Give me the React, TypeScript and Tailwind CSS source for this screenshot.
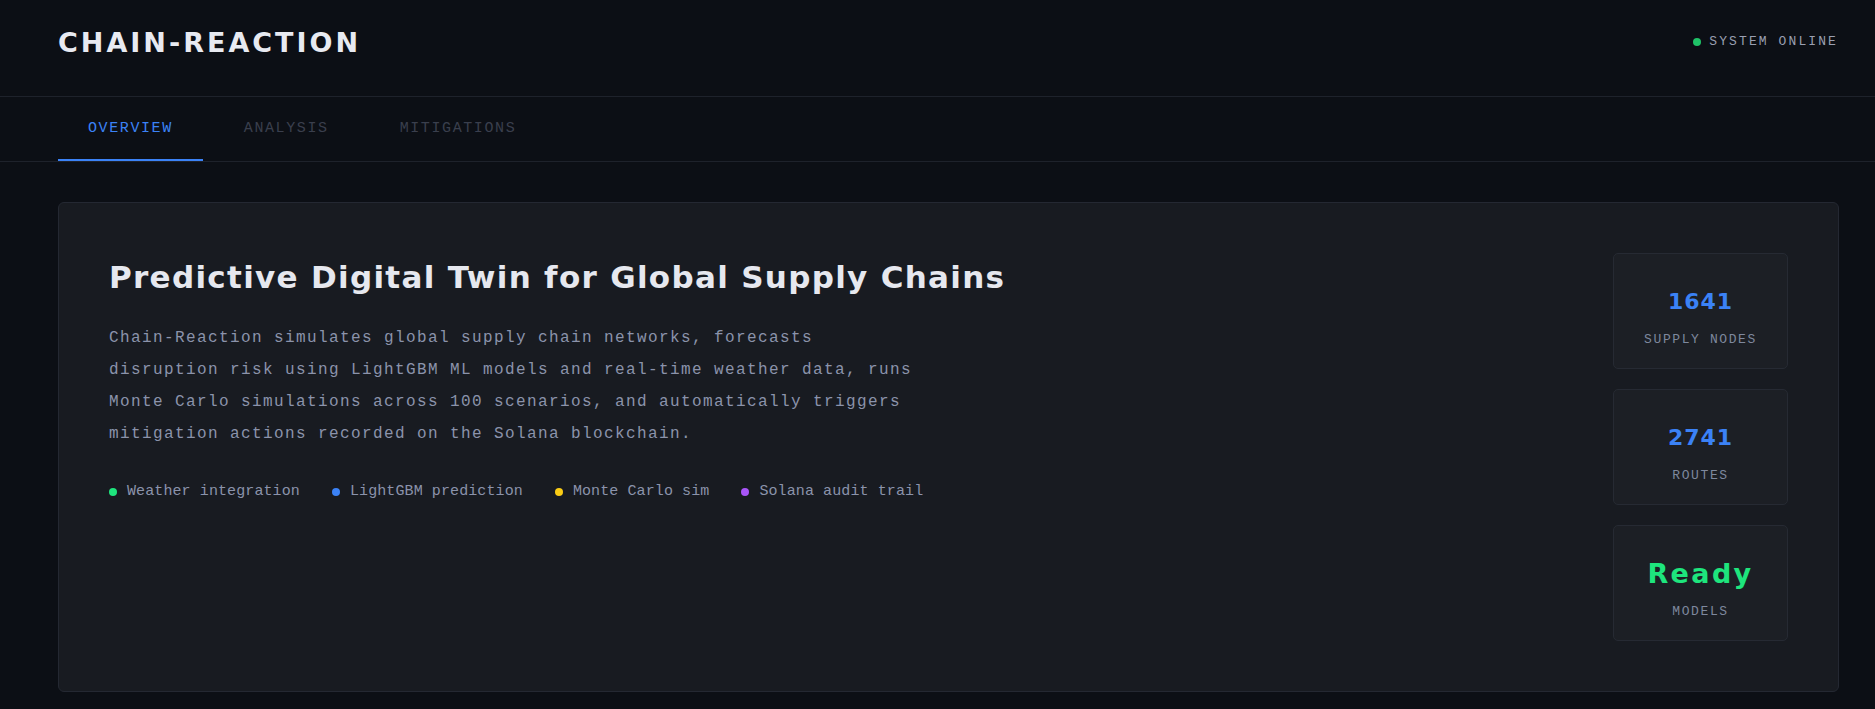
import React from 'react';

const tabs = ['OVERVIEW', 'ANALYSIS', 'MITIGATIONS'];

const features = [
  { label: 'Weather integration', dot: 'bg-[#1ee57d]' },
  { label: 'LightGBM prediction', dot: 'bg-[#3b82f6]' },
  { label: 'Monte Carlo sim', dot: 'bg-[#facc15]' },
  { label: 'Solana audit trail', dot: 'bg-[#a855f7]' },
];

const stats = [
  { value: '1641', label: 'SUPPLY NODES', color: 'text-[#3b82f6] text-[22px] tracking-[1px]' },
  { value: '2741', label: 'ROUTES', color: 'text-[#3b82f6] text-[22px] tracking-[1px]' },
  { value: 'Ready', label: 'MODELS', color: 'text-[#1ee57d] text-[27px] tracking-[2.4px]' },
];

const App: React.FC = () => {
  return (
    <div className="min-h-[709px] bg-[#0c0f15] text-[#e6e8ef] font-['Liberation_Mono',monospace]">
      {/* Top bar */}
      <header className="h-[97px] pl-[58px] pr-[37px] pb-3 flex items-center justify-between border-b border-[#1e222b]">
        <h1 className="font-['DejaVu_Sans',sans-serif] font-bold text-[27px] tracking-[3px] text-[#e8eaf1] leading-none">
          CHAIN-REACTION
        </h1>
        <div className="flex items-center gap-2">
          <span className="w-2 h-2 rounded-full bg-[#1fc267]" />
          <span className="text-[13px] tracking-[2.1px] text-[#9a9fb1]">SYSTEM ONLINE</span>
        </div>
      </header>

      {/* Tabs */}
      <nav className="h-[65px] pl-[58px] flex items-stretch gap-[11px] border-b border-[#1e222b]">
        {tabs.map((t, i) => (
          <button
            key={t}
            className={
              i === 0
                ? 'px-[30px] pt-[2px] text-[15px] tracking-[1.6px] text-[#3b82f6] border-b-2 border-[#3b82f6]'
                : 'px-[30px] pt-[2px] text-[15px] tracking-[1.6px] text-[#3a3f4d] border-b-2 border-transparent'
            }
          >
            {t}
          </button>
        ))}
      </nav>

      {/* Overview card */}
      <main className="pl-[58px] pr-[36px] pt-10 pb-[15px]">
        <section className="rounded-md border border-[#242832] bg-[#181b21] p-[50px] flex justify-between">
          <div>
            <h2 className="font-['DejaVu_Sans',sans-serif] font-bold text-[31px] leading-[40px] tracking-[1.3px] text-[#e6e8ef] mt-[4px]">
              Predictive Digital Twin for Global Supply Chains
            </h2>
            <p className="mt-[25px] max-w-[808px] text-[16px] leading-8 tracking-[1.4px] text-[#8b93ab]">
              Chain-Reaction simulates global supply chain networks, forecasts disruption risk using LightGBM ML models and real-time weather data, runs Monte Carlo simulations across 100 scenarios, and automatically triggers mitigation actions recorded on the Solana blockchain.
            </p>
            <div className="mt-[31px] flex items-center gap-8">
              {features.map((f) => (
                <div key={f.label} className="flex items-center gap-[10px]">
                  <span className={`w-2 h-2 rounded-full ${f.dot}`} />
                  <span className="text-[15px] tracking-[0.1px] text-[#8b93ab]">{f.label}</span>
                </div>
              ))}
            </div>
          </div>

          <div className="w-[175px] flex flex-col gap-5">
            {stats.map((s) => (
              <div
                key={s.label}
                className="h-[116px] pt-4 rounded-[5px] border border-[#262a33] bg-[#1c1f25] flex flex-col items-center justify-center"
              >
                <div className={`font-['DejaVu_Sans',sans-serif] font-bold leading-[28px] ${s.color}`}>
                  {s.value}
                </div>
                <div className="mt-[14px] text-[13px] tracking-[1.6px] text-[#7e889e]">{s.label}</div>
              </div>
            ))}
          </div>
        </section>
      </main>
    </div>
  );
};

export default App;
